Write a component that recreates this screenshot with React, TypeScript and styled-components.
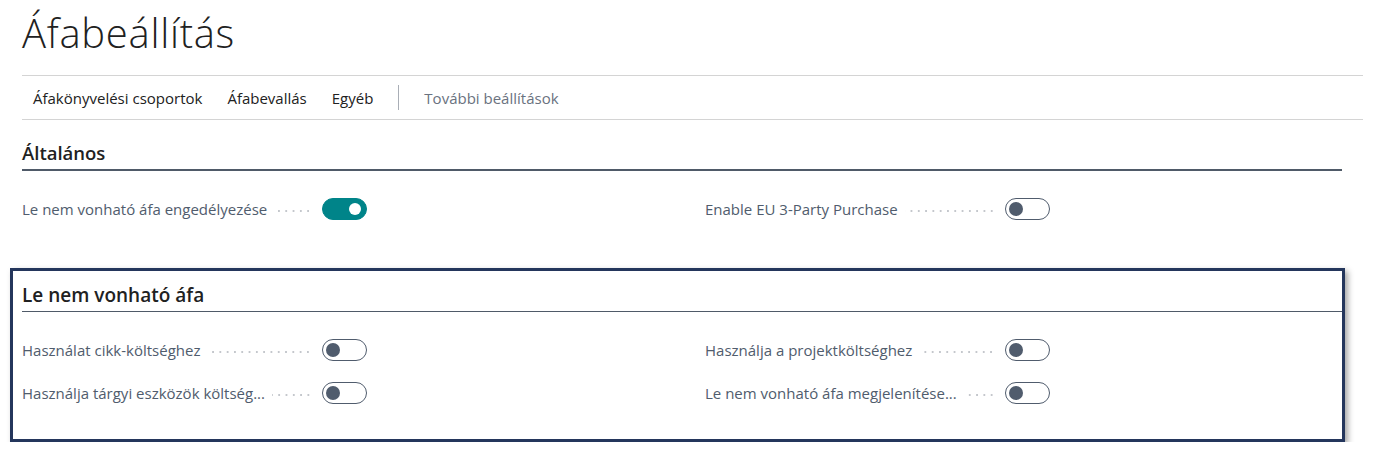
import React from "react";
import styled, { createGlobalStyle } from "styled-components";

const colors = {
  text_dark: "#212121",
  caption: "#505c6d",
  muted: "#6a7280",
  line: "#d4d4d4",
  heading_line: "#4f5a68",
  teal: "#008489",
  navy: "#24365c",
};

const GlobalStyle = createGlobalStyle`
  html, body {
    margin: 0;
    padding: 0;
    background: #ffffff;
  }
  body {
    font-family: "Open Sans", "Noto Sans", "Liberation Sans", sans-serif;
    color: ${colors.text_dark};
  }
`;

type Field = { label: string; on?: boolean };

const generalFields: Field[][] = [
  [{ label: "Le nem vonható áfa engedélyezése", on: true }],
  [{ label: "Enable EU 3-Party Purchase" }],
];

const nonDeductibleFields: Field[][] = [
  [
    { label: "Használat cikk-költséghez" },
    { label: "Használja tárgyi eszközök költség..." },
  ],
  [
    { label: "Használja a projektköltséghez" },
    { label: "Le nem vonható áfa megjelenítése..." },
  ],
];

const navItems = ["Áfakönyvelési csoportok", "Áfabevallás", "Egyéb"];

const FieldRow: React.FC<{ field: Field }> = ({ field }) => (
  <RowStyled>
    <LabelStyled>{field.label}</LabelStyled>
    <LeaderStyled />
    <ToggleStyled $on={!!field.on} role="switch" aria-checked={!!field.on}>
      <KnobStyled $on={!!field.on} />
    </ToggleStyled>
  </RowStyled>
);

const FieldGrid: React.FC<{ columns: Field[][] }> = ({ columns }) => (
  <GridStyled>
    {columns.map((col, i) => (
      <ColumnStyled key={i}>
        {col.map((f) => (
          <FieldRow key={f.label} field={f} />
        ))}
      </ColumnStyled>
    ))}
  </GridStyled>
);

const App: React.FC = () => {
  return (
    <>
      <GlobalStyle />
      <PageStyled>
        <TitleStyled>Áfabeállítás</TitleStyled>
        <NavStyled>
          {navItems.map((item) => (
            <NavItemStyled key={item}>{item}</NavItemStyled>
          ))}
          <NavDividerStyled />
          <NavItemStyled $muted>További beállítások</NavItemStyled>
        </NavStyled>

        <SectionStyled>
          <SectionHeadingStyled>Általános</SectionHeadingStyled>
          <FieldGrid columns={generalFields} />
        </SectionStyled>

        <HighlightBoxStyled>
          <SectionHeadingStyled $thin>Le nem vonható áfa</SectionHeadingStyled>
          <FieldGrid columns={nonDeductibleFields} />
        </HighlightBoxStyled>
      </PageStyled>
    </>
  );
};

export default App;

const PageStyled = styled.div`
  width: 1384px;
  box-sizing: border-box;
  padding: 0 21px 0 22px;
`;

const TitleStyled = styled.h1`
  margin: 0;
  height: 75px;
  padding-top: 8px;
  box-sizing: border-box;
  font-size: 40px;
  line-height: 50px;
  font-weight: 300;
  letter-spacing: 0.7px;
  color: ${colors.text_dark};
`;

const NavStyled = styled.nav`
  display: flex;
  align-items: center;
  gap: 25px;
  height: 45px;
  box-sizing: border-box;
  padding-left: 11px;
  border-top: 1px solid ${colors.line};
  border-bottom: 1px solid ${colors.line};
`;

const NavItemStyled = styled.span<{ $muted?: boolean }>`
  font-size: 15px;
  color: ${(p) => (p.$muted ? colors.muted : colors.text_dark)};
  white-space: nowrap;
`;

const NavDividerStyled = styled.span`
  width: 1px;
  height: 25px;
  background: #a9aeb6;
`;

const SectionStyled = styled.section`
  margin-right: 21px;
  padding-top: 21px;
`;

const SectionHeadingStyled = styled.h2<{ $thin?: boolean }>`
  margin: 0;
  font-size: ${(p) => (p.$thin ? "19px" : "18.5px")};
  line-height: 24px;
  font-weight: 600;
  color: ${colors.text_dark};
  padding-bottom: 4px;
  border-bottom: ${(p) => (p.$thin ? "1px" : "2px")} solid ${colors.heading_line};
`;

const GridStyled = styled.div`
  display: grid;
  grid-template-columns: 683px 1fr;
  margin-top: 27px;
`;

const ColumnStyled = styled.div`
  display: flex;
  flex-direction: column;
  gap: 20px;
`;

const RowStyled = styled.div`
  display: flex;
  align-items: center;
  width: 345px;
  height: 22px;
`;

const LabelStyled = styled.span`
  font-size: 15px;
  color: ${colors.caption};
  white-space: nowrap;
`;

const LeaderStyled = styled.span`
  flex: 1;
  height: 2px;
  margin: 4px 10px 0 7px;
  background-image: radial-gradient(circle, #c4c7cc 0.9px, transparent 1.1px);
  background-size: 7.3px 2px;
  background-repeat: repeat-x;
  background-position: right center;
`;

const ToggleStyled = styled.span<{ $on: boolean }>`
  position: relative;
  flex: none;
  width: 45px;
  height: 22px;
  box-sizing: border-box;
  border-radius: 11px;
  border: 1.5px solid ${(p) => (p.$on ? colors.teal : colors.caption)};
  background: ${(p) => (p.$on ? colors.teal : "#ffffff")};
`;

const KnobStyled = styled.span<{ $on: boolean }>`
  position: absolute;
  top: 50%;
  transform: translateY(-50%);
  border-radius: 50%;
  width: ${(p) => (p.$on ? "12px" : "14px")};
  height: ${(p) => (p.$on ? "12px" : "14px")};
  left: ${(p) => (p.$on ? "auto" : "3px")};
  right: ${(p) => (p.$on ? "5px" : "auto")};
  background: ${(p) => (p.$on ? "#ffffff" : colors.caption)};
`;

const HighlightBoxStyled = styled.section`
  width: 1335px;
  box-sizing: border-box;
  margin: 48px 0 0 -12px;
  padding: 12px 0 35px 9px;
  border: 3px solid ${colors.navy};
  box-shadow: 3px 3px 6px rgba(0, 0, 0, 0.35);

  & ${GridStyled} {
    margin-top: 27px;
  }

  & ${ColumnStyled} {
    gap: 21px;
  }
`;
